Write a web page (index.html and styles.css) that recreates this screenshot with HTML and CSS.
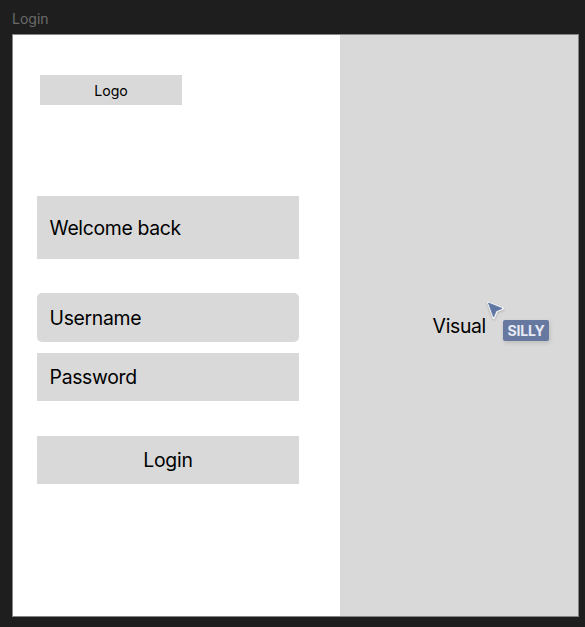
FILE: index.html
```html
<!DOCTYPE html>
<html lang="en">
<head>
<meta charset="utf-8">
<title>Login</title>
<link rel="stylesheet" href="styles.css">
</head>
<body>
<div class="frame-label">Login</div>
<main class="frame">
  <section class="form-pane">
    <div class="logo"><span>Logo</span></div>
    <div class="block welcome"><span>Welcome back</span></div>
    <div class="block username"><span>Username</span></div>
    <div class="block password"><span>Password</span></div>
    <div class="block login"><span>Login</span></div>
  </section>
  <section class="visual-pane"><span class="visual-text">Visual</span></section>
</main>
<div class="cursor">
  <svg class="pointer" width="24" height="24" viewBox="0 0 24 24">
    <path d="M4.2 3.7 L18.8 9.4 L12.7 12.2 L9.7 19 Z" fill="#f1f2f5" stroke="#f1f2f5" stroke-width="2.4" stroke-linejoin="round"/>
    <path d="M4.5 4 L18 9.4 L12 12 L9.6 18 Z" fill="#5f75a3" stroke="#5f75a3" stroke-width=".8" stroke-linejoin="round"/>
  </svg>
  <span class="tag">SILLY</span>
</div>
</body>
</html>
```

FILE: styles.css
```css
* { box-sizing: border-box; }

body {
  margin: 0;
  height: 627px;
  padding-left: 12px;
  background: #1e1e1e;
  color: #000;
  font-family: Inter, sans-serif;
  overflow: hidden;
}

.frame-label {
  height: 34px;
  padding-top: 10px;
  font-size: 14px;
  line-height: 18px;
  color: #6b6b6b;
}

.frame {
  display: flex;
  width: 567px;
  height: 583px;
  border: 1px solid #858585;
  background: #fff;
}

.form-pane {
  display: flex;
  flex-direction: column;
  width: 327px;
  padding: 40.3px 0 0 24px;
}

.logo {
  display: flex;
  align-items: center;
  justify-content: center;
  width: 142px;
  height: 30px;
  margin-left: 3px;
  background: #d9d9d9;
  font-size: 14.2px;
}

.block {
  display: flex;
  align-items: center;
  width: 262px;
  height: 48px;
  padding-left: 12.6px;
  background: #d9d9d9;
  font-size: 19.4px;
  line-height: 24px;
  letter-spacing: -0.33px;
}

.welcome { height: 63px; margin-top: 91px; }
.username { height: 49px; margin-top: 34px; border-radius: 5px; }
.password { margin-top: 11px; }
.login { height: 48px; margin-top: 35px; justify-content: center; padding: 0; letter-spacing: -0.2px; }

.visual-pane {
  flex: 1;
  padding: 279px 0 0 92.6px;
  background: #d9d9d9;
  font-size: 19.4px;
  line-height: 24px;
  letter-spacing: -0.33px;
}

.cursor {
  position: absolute;
  left: 484px;
  top: 299px;
  width: 66px;
  height: 44px;
}

.pointer {
  display: block;
  filter: drop-shadow(0 1px 1px rgba(0, 0, 0, 0.2));
}

.tag {
  position: absolute;
  left: 19px;
  top: 21px;
  width: 46px;
  height: 21px;
  border-radius: 2px;
  background: #66789f;
  box-shadow: 1px 2px 4px rgba(0, 0, 0, 0.13);
  color: #e6eaf4;
  font-size: 14px;
  font-weight: 700;
  letter-spacing: -0.2px;
  line-height: 21px;
  text-align: center;
}
```
